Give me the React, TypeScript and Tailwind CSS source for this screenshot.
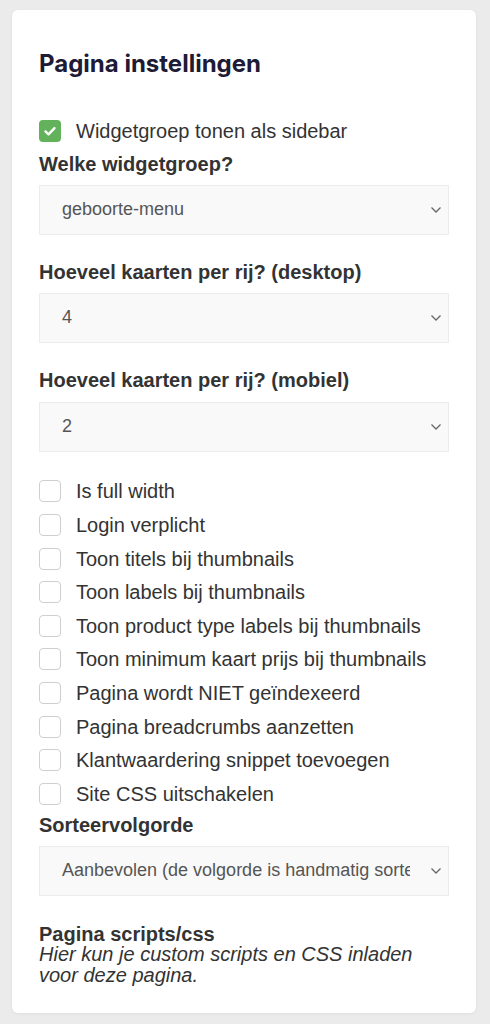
import { useState } from "react";

const OPTIONS = [
  { key: "fullWidth", label: "Is full width" },
  { key: "login", label: "Login verplicht" },
  { key: "titles", label: "Toon titels bij thumbnails" },
  { key: "labels", label: "Toon labels bij thumbnails" },
  { key: "typeLabels", label: "Toon product type labels bij thumbnails" },
  { key: "minPrice", label: "Toon minimum kaart prijs bij thumbnails" },
  { key: "noIndex", label: "Pagina wordt NIET geïndexeerd" },
  { key: "breadcrumbs", label: "Pagina breadcrumbs aanzetten" },
  { key: "snippet", label: "Klantwaardering snippet toevoegen" },
  { key: "noCss", label: "Site CSS uitschakelen" },
];

function Checkbox({ checked, onChange, label }: { checked: boolean; onChange: () => void; label: string }) {
  return (
    <label className="flex items-center gap-[15px] h-[33.6px] cursor-pointer select-none">
      <span
        className={`w-[22px] h-[22px] rounded-[4px] flex items-center justify-center shrink-0 ${
          checked ? "bg-[#62b25b]" : "bg-white border border-[#cfcfcf]"
        }`}
        onClick={onChange}
      >
        {checked && (
          <svg width="14" height="14" viewBox="0 0 14 14" fill="none">
            <path d="M2.5 7.4l3 2.9 6-6.2" stroke="white" strokeWidth="2.4" strokeLinecap="round" strokeLinejoin="round" />
          </svg>
        )}
      </span>
      <span className="text-[20px] text-[#333] leading-[22px]">{label}</span>
    </label>
  );
}

function Select({ value, options }: { value: string; options: string[] }) {
  const [v, setV] = useState(value);
  return (
    <div className="relative">
      <select
        value={v}
        onChange={(e) => setV(e.target.value)}
        className="w-full h-[50px] appearance-none bg-[#f9f9f9] border border-[#ececec] pl-[22px] pr-[38px] text-[18px] text-[#555] outline-none"
        style={{ fontFamily: '"Liberation Sans", Arial, sans-serif' }}
      >
        {options.map((o) => (
          <option key={o} value={o}>
            {o}
          </option>
        ))}
      </select>
      <svg
        className="absolute right-[7px] top-1/2 -translate-y-1/2 pointer-events-none"
        width="12"
        height="8"
        viewBox="0 0 12 8"
        fill="none"
      >
        <path d="M1.5 1.5l4.5 4.5 4.5-4.5" stroke="#666" strokeWidth="1.3" />
      </svg>
    </div>
  );
}

export default function App() {
  const [sidebar, setSidebar] = useState(true);
  const [flags, setFlags] = useState<Record<string, boolean>>({});

  return (
    <div
      className="min-h-[1024px] bg-[#ebebeb] pl-[12px] pr-[14px] pt-[10px] pb-[13px]"
      style={{ fontFamily: '"Liberation Sans", Arial, sans-serif' }}
    >
      <div className="bg-white rounded-[6px] shadow-[0_1px_3px_rgba(0,0,0,0.06)] px-[27px] pt-[39px] pb-[27px]">
        <h1
          className="text-[24px] font-bold text-[#1d1b36] leading-[30px]"
          style={{ fontFamily: "Inter, sans-serif" }}
        >
          Pagina instellingen
        </h1>

        <div className="mt-[35px]">
          <Checkbox checked={sidebar} onChange={() => setSidebar(!sidebar)} label="Widgetgroep tonen als sidebar" />
        </div>

        <h3 className="text-[20px] font-bold text-[#333] leading-[22px] mt-[5px] mb-[10px]">Welke widgetgroep?</h3>
        <Select value="geboorte-menu" options={["geboorte-menu", "hoofd-menu", "trouw-menu"]} />

        <h3 className="text-[20px] font-bold text-[#333] leading-[22px] mt-[26px] mb-[10px]">
          Hoeveel kaarten per rij? (desktop)
        </h3>
        <Select value="4" options={["1", "2", "3", "4", "5", "6"]} />

        <h3 className="text-[20px] font-bold text-[#333] leading-[22px] mt-[26px] mb-[11px]">
          Hoeveel kaarten per rij? (mobiel)
        </h3>
        <Select value="2" options={["1", "2", "3"]} />

        <div className="mt-[23px] flex flex-col">
          {OPTIONS.map((o) => (
            <Checkbox
              key={o.key}
              checked={!!flags[o.key]}
              onChange={() => setFlags({ ...flags, [o.key]: !flags[o.key] })}
              label={o.label}
            />
          ))}
        </div>

        <h3 className="text-[20px] font-bold text-[#333] leading-[22px] mt-[3px] mb-[10px]">Sorteervolgorde</h3>
        <Select
          value="Aanbevolen (de volgorde is handmatig sorteerbaar)"
          options={["Aanbevolen (de volgorde is handmatig sorteerbaar)", "Nieuwste eerst", "Prijs oplopend"]}
        />

        <div className="mt-[28px] text-[#333]">
          <h3 className="text-[20px] font-bold leading-[20px]">Pagina scripts/css</h3>
          <p className="text-[20px] italic leading-[21px]">Hier kun je custom scripts en CSS inladen voor deze pagina.</p>
        </div>
      </div>
    </div>
  );
}
